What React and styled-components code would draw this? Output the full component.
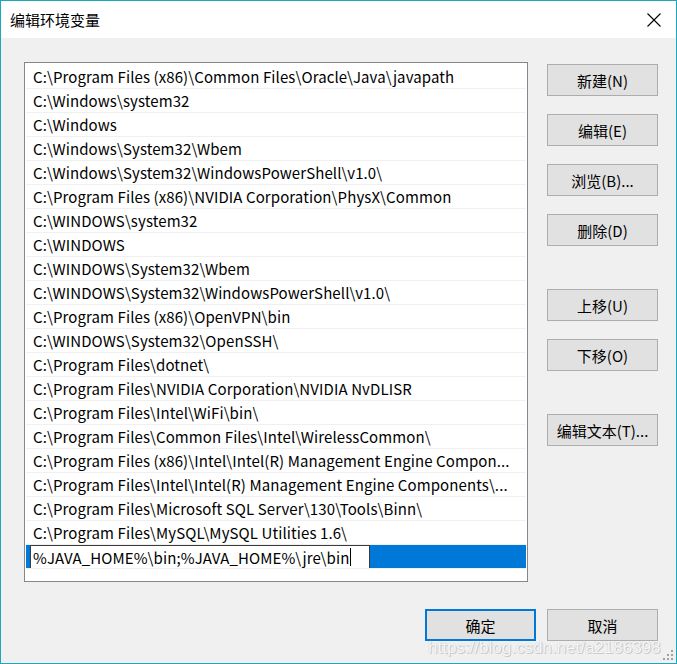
import React from 'react';
import styled, { createGlobalStyle } from 'styled-components';

const GlobalStyle = createGlobalStyle`
  html, body {
    margin: 0;
    padding: 0;
    background: #f0f0f0;
  }
  * {
    box-sizing: border-box;
  }
`;

const Window = styled.div`
  position: relative;
  width: 677px;
  height: 664px;
  display: flex;
  flex-direction: column;
  border: 1px solid #1aa9bc;
  background: #f0f0f0;
  font-family: "Noto Sans CJK SC", "Noto Sans", sans-serif;
  font-size: 15px;
  color: #000;
  overflow: hidden;
`;

const TitleBar = styled.div`
  height: 37px;
  flex-shrink: 0;
  display: flex;
  align-items: center;
  justify-content: space-between;
  padding: 0 14px 0 9px;
  background: #fff;
`;

const Title = styled.span`
  font-size: 15px;
  line-height: 1;
`;

const CloseButton = styled.div`
  width: 16px;
  height: 16px;
  display: flex;
  align-items: center;
  justify-content: center;
`;

const Body = styled.div`
  flex: 1;
  display: flex;
  flex-direction: column;
  padding: 24px 18px 0 23px;
`;

const Main = styled.div`
  display: flex;
  gap: 19px;
`;

const ListBox = styled.div`
  width: 504px;
  height: 520px;
  border: 1px solid #828790;
  background: #fff;
  padding: 2px 1px;
  overflow: hidden;
`;

const Row = styled.div`
  height: 24px;
  display: flex;
  align-items: center;
  padding-left: ${(p) => (p.$editing ? '4px' : '7px')};
  border-bottom: 1px solid #f0f0f0;
  background: ${(p) => (p.$editing ? '#0078d7' : 'transparent')};
  white-space: nowrap;
  overflow: hidden;
`;

const RowText = styled.span`
  line-height: 1;
  letter-spacing: 0.1px;
`;

const EditBox = styled.div`
  height: 24px;
  width: 340px;
  margin-top: 1px;
  display: flex;
  align-items: center;
  padding-left: 2px;
  background: #fff;
  border: 1px solid #3c3c3c;
  white-space: nowrap;
`;

const Caret = styled.span`
  display: inline-block;
  width: 1px;
  height: 18px;
  margin-left: 1px;
  background: #000;
`;

const ButtonColumn = styled.div`
  display: flex;
  flex-direction: column;
  padding-top: 2px;
`;

const Button = styled.div`
  width: 111px;
  height: 32px;
  margin-top: ${(p) => p.$gap || 0}px;
  display: flex;
  align-items: center;
  justify-content: center;
  background: #e1e1e1;
  border: ${(p) => (p.$default ? '2px solid #0078d7' : '1px solid #adadad')};
  font-size: 15px;
  line-height: 1;
`;

const Footer = styled.div`
  display: flex;
  justify-content: flex-end;
  gap: 11px;
  padding-top: 27px;
`;

const Watermark = styled.div`
  position: absolute;
  left: 427px;
  top: 637px;
  font-family: "Liberation Sans", sans-serif;
  font-size: 17px;
  color: rgba(255, 255, 255, 0.9);
  text-shadow: 0 0 1px #b8b8b8, 1px 1px 0 rgba(180, 180, 180, 0.6);
  white-space: nowrap;
  pointer-events: none;
`;

const Grip = styled.svg`
  position: absolute;
  right: 3px;
  bottom: 3px;
`;

const paths = [
  'C:\\Program Files (x86)\\Common Files\\Oracle\\Java\\javapath',
  'C:\\Windows\\system32',
  'C:\\Windows',
  'C:\\Windows\\System32\\Wbem',
  'C:\\Windows\\System32\\WindowsPowerShell\\v1.0\\',
  'C:\\Program Files (x86)\\NVIDIA Corporation\\PhysX\\Common',
  'C:\\WINDOWS\\system32',
  'C:\\WINDOWS',
  'C:\\WINDOWS\\System32\\Wbem',
  'C:\\WINDOWS\\System32\\WindowsPowerShell\\v1.0\\',
  'C:\\Program Files (x86)\\OpenVPN\\bin',
  'C:\\WINDOWS\\System32\\OpenSSH\\',
  'C:\\Program Files\\dotnet\\',
  'C:\\Program Files\\NVIDIA Corporation\\NVIDIA NvDLISR',
  'C:\\Program Files\\Intel\\WiFi\\bin\\',
  'C:\\Program Files\\Common Files\\Intel\\WirelessCommon\\',
  'C:\\Program Files (x86)\\Intel\\Intel(R) Management Engine Compon...',
  'C:\\Program Files\\Intel\\Intel(R) Management Engine Components\\...',
  'C:\\Program Files\\Microsoft SQL Server\\130\\Tools\\Binn\\',
  'C:\\Program Files\\MySQL\\MySQL Utilities 1.6\\',
];

const sideButtons = [
  { label: '新建(N)', gap: 0 },
  { label: '编辑(E)', gap: 18 },
  { label: '浏览(B)...', gap: 18 },
  { label: '删除(D)', gap: 18 },
  { label: '上移(U)', gap: 43 },
  { label: '下移(O)', gap: 18 },
  { label: '编辑文本(T)...', gap: 43 },
];

const App = () => {
  return (
    <>
      <GlobalStyle />
      <Window>
        <TitleBar>
          <Title>编辑环境变量</Title>
          <CloseButton>
            <svg width="14" height="14" viewBox="0 0 14 14">
              <path d="M0.5 0.5 L13.5 13.5 M13.5 0.5 L0.5 13.5" stroke="#000" strokeWidth="1.1" fill="none" />
            </svg>
          </CloseButton>
        </TitleBar>

        <Body>
          <Main>
            <ListBox>
              {paths.map((p) => (
                <Row key={p}>
                  <RowText>{p}</RowText>
                </Row>
              ))}
              <Row $editing>
                <EditBox>
                  <RowText>%JAVA_HOME%\bin;%JAVA_HOME%\jre\bin</RowText>
                  <Caret />
                </EditBox>
              </Row>
            </ListBox>

            <ButtonColumn>
              {sideButtons.map((b) => (
                <Button key={b.label} $gap={b.gap}>
                  {b.label}
                </Button>
              ))}
            </ButtonColumn>
          </Main>

          <Footer>
            <Button $default>确定</Button>
            <Button>取消</Button>
          </Footer>
        </Body>

        <Watermark>https://blog.csdn.net/a2186398</Watermark>
        <Grip width="10" height="10" viewBox="0 0 10 10">
          <rect x="8" y="0" width="2" height="2" fill="#a0a0a0" />
          <rect x="4" y="4" width="2" height="2" fill="#a0a0a0" />
          <rect x="8" y="4" width="2" height="2" fill="#a0a0a0" />
          <rect x="0" y="8" width="2" height="2" fill="#a0a0a0" />
          <rect x="4" y="8" width="2" height="2" fill="#a0a0a0" />
          <rect x="8" y="8" width="2" height="2" fill="#a0a0a0" />
        </Grip>
      </Window>
    </>
  );
};

export default App;
